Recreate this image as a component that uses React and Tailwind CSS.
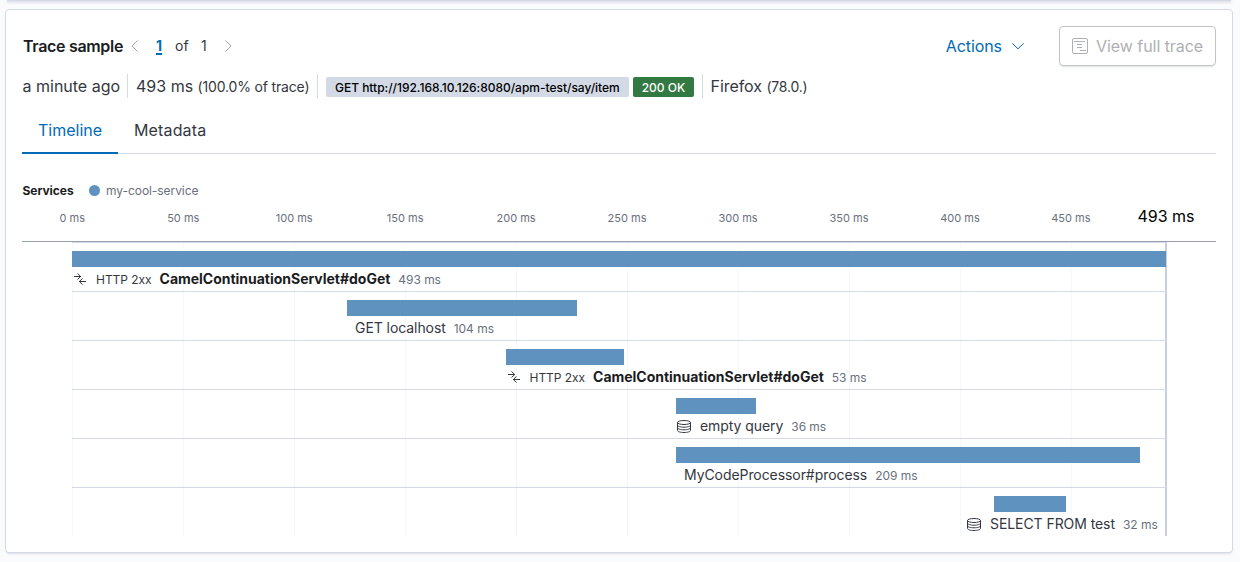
import React from 'react';
import clsx from 'clsx';

const DURATION = 493;
const TRACK_WIDTH = 1094;

const ticks = [0, 50, 100, 150, 200, 250, 300, 350, 400, 450];

const spans = [
    { name: "CamelContinuationServlet#doGet", left: 0, width: 1094, labelLeft: 0, duration: "493 ms", type: "transaction", result: "HTTP 2xx" },
    { name: "GET localhost", left: 275, width: 230, labelLeft: 283, duration: "104 ms" },
    { name: "CamelContinuationServlet#doGet", left: 434, width: 118, labelLeft: 433.5, duration: "53 ms", type: "transaction", result: "HTTP 2xx" },
    { name: "empty query", left: 604, width: 80, labelLeft: 604, duration: "36 ms", type: "db" },
    { name: "MyCodeProcessor#process", left: 604, width: 464, labelLeft: 612, duration: "209 ms" },
    { name: "SELECT FROM test", left: 922, width: 72, labelLeft: 894, duration: "32 ms", type: "db" }
];

function MergeIcon() {
    return (
        <svg width="16" height="16" viewBox="0 0 16 16" fill="none" stroke="#343741" className="shrink-0">
            <path d="M2 5.5h7M5.5 2.5l3.2 3-3.2 3M14 10.5H7M10.5 7.5l-3.2 3 3.2 3" />
        </svg>
    );
}

function DatabaseIcon() {
    return (
        <svg width="16" height="16" viewBox="0 0 16 16" fill="none" stroke="#343741" className="shrink-0">
            <ellipse cx="8" cy="4.5" rx="6.5" ry="2" />
            <path d="M1.5 4.5v8c0 1.1 2.9 2 6.5 2s6.5-.9 6.5-2v-8M1.5 7.2c0 1.1 2.9 2 6.5 2s6.5-.9 6.5-2M1.5 9.8c0 1.1 2.9 2 6.5 2s6.5-.9 6.5-2" />
        </svg>
    );
}

function Chevron({ direction }) {
    const paths = {
        left: "M10.5 2.5L5 8l5.5 5.5",
        right: "M5.5 2.5L11 8l-5.5 5.5",
        down: "M2.3 5.3L8 10.8l5.7-5.5"
    };
    return (
        <svg width="16" height="16" viewBox="0 0 16 16" fill="none" stroke="currentColor" className="shrink-0">
            <path d={paths[direction]} />
        </svg>
    );
}

function TraceHeader() {
    return (
        <div className="flex h-10 items-center">
            <h5 className="w-[105px] pl-px text-[16px] font-semibold tracking-[-0.32px] text-[#1a1c21]">Trace sample</h5>
            <div className="flex items-center text-[14px]">
                <span className="text-[#a2a5ab]"><Chevron direction="left" /></span>
                <span className="-mt-px ml-3 w-[20px] pl-px font-bold text-[#006bb4] underline decoration-2 underline-offset-2">1</span>
                <span className="-mt-px w-[26px]">of</span>
                <span className="-mt-px w-[19px]">1</span>
                <span className="text-[#a2a5ab]"><Chevron direction="right" /></span>
            </div>
            <button className="ml-auto flex items-center gap-2 text-[16px] tracking-[-0.08px] text-[#006bb4]">
                Actions
                <Chevron direction="down" />
            </button>
            <button className="ml-[33px] flex h-10 w-[157px] items-center gap-2 rounded border border-[#c2c3c6] pl-3 text-[16px] tracking-[-0.05px] text-[#afb0b3] shadow-[0_2px_2px_-1px_rgba(152,162,179,0.3)]">
                <svg width="16" height="16" viewBox="0 0 16 16" fill="none" stroke="currentColor" className="shrink-0">
                    <rect x="0.5" y="0.5" width="15" height="15" rx="1.5" />
                    <path d="M2 3.5h11M5 6.5h5M5 9.5h5M8 12.5h6" />
                </svg>
                <span className="whitespace-nowrap">View full trace</span>
            </button>
        </div>
    );
}

function TraceSummary() {
    return (
        <div className="mt-2 flex h-6 items-center whitespace-nowrap text-[16px]">
            <div className="w-[105px] pl-[0.5px]">a minute ago</div>
            <div className="flex h-6 w-[190px] items-center border-l border-[#d3dae6] pl-2">
                493 ms&nbsp;<span className="text-[14px] tracking-[-0.17px]">(100.0% of trace)</span>
            </div>
            <div className="flex h-6 w-[385px] items-center gap-1 border-l border-[#d3dae6] pl-2 text-[12px] font-medium">
                <span className="mt-0.5 h-5 w-[303px] rounded-[2px] bg-[#d3dae6] pl-[9px] leading-[21px] tracking-[-0.02px] text-black">GET http://192.168.10.126:8080/apm-test/say/item</span>
                <span className="mt-0.5 h-5 w-[61px] rounded-[2px] bg-[#327a42] text-center leading-[21px] text-white">200 OK</span>
            </div>
            <div className="flex h-6 items-center border-l border-[#d3dae6] pl-[7.5px]">
                <span className="tracking-[-0.05px]">Firefox&nbsp;</span>
                <span className="text-[14px] tracking-[-0.2px]">(78.0.)</span>
            </div>
        </div>
    );
}

function Axis() {
    return (
        <div className="relative h-[41px] border-b border-[#98a2b3]">
            {ticks.map((tick) => (
                <span
                    key={tick}
                    className="absolute top-[9px] -translate-x-1/2 whitespace-nowrap text-[11px] leading-4 text-[#69707d]"
                    style={{ left: 50.3 + (tick / DURATION) * TRACK_WIDTH }}
                >
                    {tick} ms
                </span>
            ))}
            <span className="absolute left-[1144px] top-[3px] -translate-x-1/2 whitespace-nowrap text-[16px] leading-6 text-black">
                493 ms
            </span>
        </div>
    );
}

function SpanRow({ span }) {
    return (
        <div className="h-[49px] border-t border-[#d3dae6] pt-2">
            <div className="h-4 bg-[#6092c0]" style={{ marginLeft: span.left, width: span.width }} />
            <div className="flex h-6 items-center whitespace-nowrap" style={{ marginLeft: span.labelLeft }}>
                {span.type === 'transaction' && <MergeIcon />}
                {span.type === 'db' && <DatabaseIcon />}
                {span.result && <span className="ml-2 mt-0.5 text-[12px] tracking-[-0.04px]">{span.result}</span>}
                <span
                    className={clsx(
                        "text-[14px]",
                        span.type && "ml-2",
                        span.result ? "-mt-px font-bold tracking-[-0.02px] text-[#1a1c21]" : "-mt-px tracking-[-0.07px]"
                    )}
                >
                    {span.name}
                </span>
                <span className="ml-2 mt-0.5 text-[12px] tracking-[-0.04px] text-[#69707d]">{span.duration}</span>
            </div>
        </div>
    );
}

export default function App() {
    return (
        <div className="h-[562px] overflow-hidden bg-[#fafbfd] pl-[5px] font-['Inter',sans-serif] text-[#343741]">
            <div className="ml-0.5 h-[1px] w-[1224px] bg-[#d3dae6] shadow-[0_1px_3px_rgba(152,162,179,0.8)]" />
            <section className="mt-2 h-[544px] w-[1228px] rounded border border-[#d3dae6] bg-white px-4 pt-4 shadow-[0_2px_2px_-1px_rgba(152,162,179,0.3)]">
                <TraceHeader />
                <TraceSummary />
                <nav className="mt-2 flex h-[48px] border-b border-[#d3dae6] text-[16px]">
                    <a className="-mb-px w-24 border-b-2 border-[#006bb4] text-center leading-[48px] text-[#006bb4]">Timeline</a>
                    <a className="ml-4 leading-[48px] tracking-[0.15px]">Metadata</a>
                </nav>
                <div className="mt-[27px] flex h-5 items-center text-[12px]">
                    <span className="w-[67px] pl-[0.5px] font-bold tracking-[-0.05px] text-[#1a1c21]">Services</span>
                    <span className="-mt-px mr-[6px] size-[11px] rounded-full bg-[#6092c0]" />
                    <span className="tracking-[-0.06px] text-[#69707d]">my-cool-service</span>
                </div>
                <Axis />
                <div className="relative ml-[50px] w-[1094px]">
                    {ticks.map((tick) => (
                        <div
                            key={tick}
                            className="absolute inset-y-0 w-px bg-[#f5f7fa]"
                            style={{ left: (tick / DURATION) * TRACK_WIDTH }}
                        />
                    ))}
                    <div className="absolute inset-y-0 -right-px w-0.5 bg-[#c9cedb]" />
                    <div className="relative">
                        {spans.map((span, index) => (
                            <SpanRow key={index} span={span} />
                        ))}
                    </div>
                </div>
            </section>
        </div>
    );
}
